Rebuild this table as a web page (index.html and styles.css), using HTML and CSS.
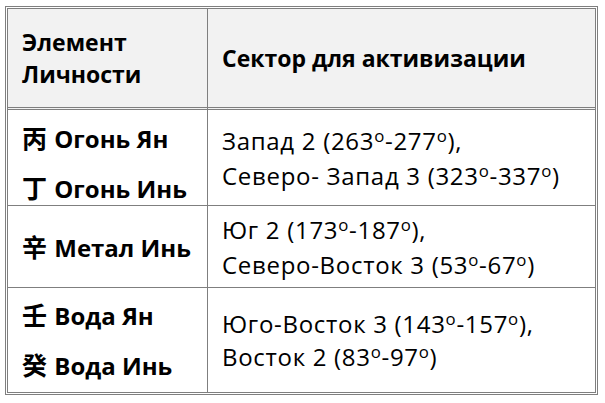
FILE: index.html
```html
<!DOCTYPE html>
<html lang="ru">
<head>
<meta charset="utf-8">
<link rel="stylesheet" href="styles.css">
</head>
<body>
<div class="frame">
  <div class="grid">
    <div class="cell head left"><div>Элемент<br>Личности</div></div>
    <div class="cell head"><div>Сектор для активизации</div></div>

    <div class="cell r1 left">
      <p class="el"><span class="cjk">丙</span> Огонь Ян</p>
      <p class="el"><span class="cjk">丁</span> Огонь Инь</p>
    </div>
    <div class="cell r1 txt">
      <p>Запад 2 (263<span class="deg">o</span>-277<span class="deg">o</span>),</p>
      <p>Северо- Запад 3 (323<span class="deg">o</span>-337<span class="deg">o</span>)</p>
    </div>

    <div class="cell r2 left">
      <p class="el"><span class="cjk">辛</span> Метал Инь</p>
    </div>
    <div class="cell r2 txt">
      <p>Юг 2 (173<span class="deg">o</span>-187<span class="deg">o</span>),</p>
      <p>Северо-Восток 3 (53<span class="deg">o</span>-67<span class="deg">o</span>)</p>
    </div>

    <div class="cell r3 left">
      <p class="el"><span class="cjk">壬</span> Вода Ян</p>
      <p class="el"><span class="cjk">癸</span> Вода Инь</p>
    </div>
    <div class="cell r3 txt">
      <p>Юго-Восток 3 (143<span class="deg">o</span>-157<span class="deg">o</span>),</p>
      <p>Восток 2 (83<span class="deg">o</span>-97<span class="deg">o</span>)</p>
    </div>
  </div>
</div>
</body>
</html>
```
FILE: styles.css
```css
html, body { margin: 0; padding: 0; background: #fff; }
body { padding: 6px 0 0 5px; font-family: "Open Sans", "Noto Sans", "Noto Sans CJK SC", sans-serif; color: #000; }
.frame { width: 593px; height: 389px; box-sizing: border-box; border: 3px double #7f7f7f; overflow: hidden; }
.grid { display: grid; grid-template-columns: 200px 1fr; grid-template-rows: 101px 96px 82px 104px; }
.cell { box-sizing: border-box; display: flex; flex-direction: column; justify-content: center; padding-left: 14px; min-height: 0; overflow: hidden; }
.left { border-right: 1px solid #7f7f7f; }
.head { background: #f2f2f2; border-bottom: 3px double #7f7f7f; font-weight: 700; font-size: 23px; line-height: 32px; }
.r1 { border-bottom: 1px solid #7f7f7f; }
.r1.left { padding-top: 10px; }
.r2 { border-bottom: 1px solid #7f7f7f; }
p { margin: 0; white-space: nowrap; }
.txt p { font-size: 24px; line-height: 35px; letter-spacing: 0.7px; }
.r3.txt p { line-height: 33px; }
.el { font-weight: 700; font-size: 24px; line-height: 49px; }
.cjk { font-family: "Noto Sans CJK SC", sans-serif; font-size: 25px; font-weight: 700; margin-right: 1px; }
.deg { font-size: 0.7em; vertical-align: 0.5em; line-height: 0; }
```
